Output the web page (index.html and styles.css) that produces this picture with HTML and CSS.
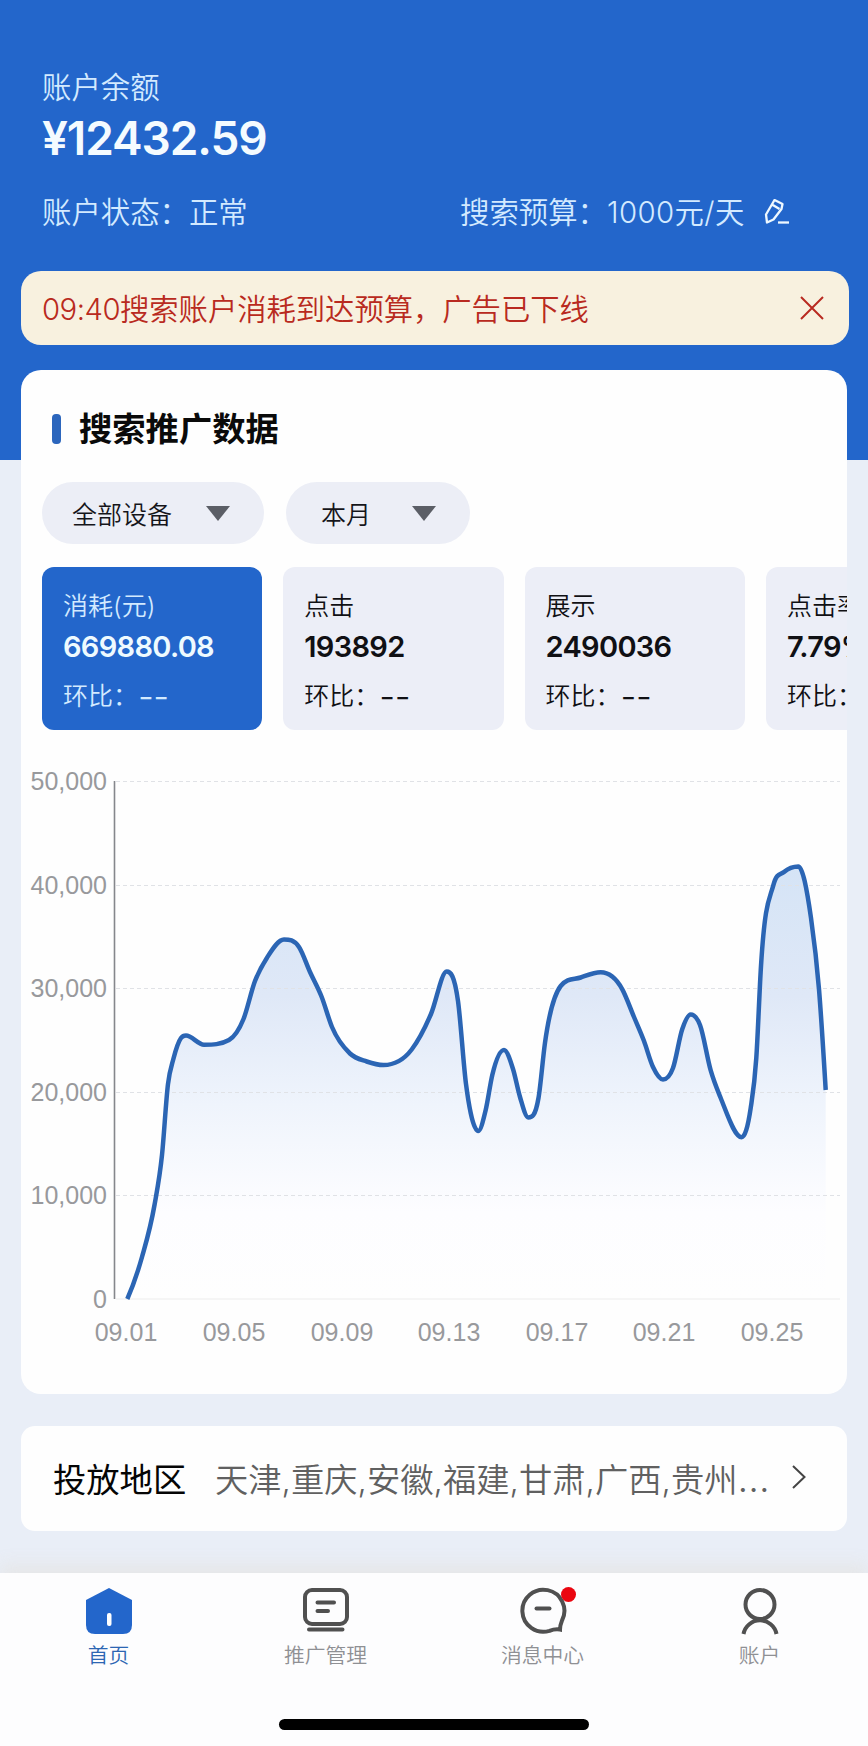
FILE: index.html
```
<!DOCTYPE html>
<html lang="zh-CN">
<head>
    <meta charset="UTF-8">
    <meta name="viewport" content="width=device-width, initial-scale=1.0">
    <title>搜索推广</title>
    <link rel="stylesheet" href="styles.css">
</head>
<body>
    <div class="page">
        <header class="account">
            <p class="accountLabel">账户余额</p>
            <h1 class="balance">¥12432.59</h1>
            <div class="accountRow">
                <p class="accountStatus">账户状态：正常</p>
                <p class="budget">搜索预算：<span class="budgetValue">1000元/天</span></p>
                <svg class="editIcon" width="26" height="28" viewBox="0 0 26 28" fill="none" stroke="currentColor" stroke-width="2.3" stroke-linejoin="round">
                    <path d="M10.5 1 L18.5 5 L17.5 10 L9.5 20.5 L3 23.5 L2 15.5 Z M8 5.5 L15.5 10"/>
                    <path d="M14 23.5 H25"/>
                </svg>
            </div>
        </header>

        <div class="notice">
            <span><span class="noticeTime">09:40</span>搜索账户消耗到达预算，广告已下线</span>
            <svg width="24" height="24" viewBox="0 0 24 24" fill="none" stroke="currentColor" stroke-width="2">
                <path d="M1 1 L23 23 M23 1 L1 23"/>
            </svg>
        </div>

        <section class="dataCard">
            <h2 class="cardTitle"><span>搜索推广数据</span></h2>
            <div class="filters">
                <button class="filter filterDevice">全部设备<i class="arrow"></i></button>
                <button class="filter filterMonth">本月<i class="arrow"></i></button>
            </div>
            <div class="stats">
                <div class="stat active">
                    <span class="statName">消耗(元)</span>
                    <strong>669880.08</strong>
                    <span class="statRatio">环比：<b class="dash">--</b></span>
                </div>
                <div class="stat">
                    <span class="statName">点击</span>
                    <strong>193892</strong>
                    <span class="statRatio">环比：<b class="dash">--</b></span>
                </div>
                <div class="stat">
                    <span class="statName">展示</span>
                    <strong>2490036</strong>
                    <span class="statRatio">环比：<b class="dash">--</b></span>
                </div>
                <div class="stat">
                    <span class="statName">点击率</span>
                    <strong>7.79%</strong>
                    <span class="statRatio">环比：<b class="dash">--</b></span>
                </div>
            </div>
            <svg class="chart" width="826" height="590" viewBox="21 760 826 590">
                <defs>
                    <linearGradient id="areaFill" gradientUnits="userSpaceOnUse" x1="0" y1="866" x2="0" y2="1299">
                        <stop offset="0" stop-color="#d5e4f6"/>
                        <stop offset="0.3" stop-color="#dfe8f7"/>
                        <stop offset="0.55" stop-color="#eff4fc"/>
                        <stop offset="0.8" stop-color="#fdfdff"/>
                        <stop offset="1" stop-color="#fefefe"/>
                    </linearGradient>
                </defs>
                <path id="area" class="area"/>
                <g class="grid">
                    <path d="M116 781.5 H840 M116 885.5 H840 M116 988.5 H840 M116 1092.5 H840 M116 1195.5 H840"/>
                    <path class="base" d="M116 1299 H840"/>
                </g>
                <path class="axis" d="M114.5 781 V1299"/>
                <path id="line" class="line"/>
                <g class="yLabels">
                    <text x="107" y="790">50,000</text>
                    <text x="107" y="894">40,000</text>
                    <text x="107" y="997">30,000</text>
                    <text x="107" y="1101">20,000</text>
                    <text x="107" y="1204">10,000</text>
                    <text x="107" y="1308">0</text>
                </g>
                <g class="xLabels">
                    <text x="126" y="1341">09.01</text>
                    <text x="234" y="1341">09.05</text>
                    <text x="342" y="1341">09.09</text>
                    <text x="449" y="1341">09.13</text>
                    <text x="557" y="1341">09.17</text>
                    <text x="664" y="1341">09.21</text>
                    <text x="772" y="1341">09.25</text>
                </g>
            </svg>
        </section>

        <section class="region">
            <span class="regionTitle">投放地区</span>
            <span class="regionList">天津,重庆,安徽,福建,甘肃,广西,贵州<span class="more">…</span></span>
            <svg width="16" height="26" viewBox="0 0 16 26" fill="none" stroke="#444" stroke-width="2">
                <path d="M2 2 L13.5 13 L2 24"/>
            </svg>
        </section>

        <nav class="tabbar">
            <div class="tabs">
                <a class="tab current">
                    <svg width="48" height="48" viewBox="0 0 48 48">
                        <path fill="#2366cb" d="M24 1 L47 13 V38 Q47 47 38 47 H10 Q1 47 1 38 V13 Z"/>
                        <rect x="22" y="26" width="4.5" height="13" rx="2" fill="#fff"/>
                    </svg>
                    <span>首页</span>
                </a>
                <a class="tab">
                    <svg width="48" height="48" viewBox="0 0 48 48" fill="none" stroke="#505050" stroke-width="4" stroke-linecap="round">
                        <rect x="3" y="3" width="42" height="34" rx="7"/>
                        <path d="M15.5 15.5 H32 M15.5 24 H26 M7 42.5 H40.5"/>
                    </svg>
                    <span>推广管理</span>
                </a>
                <a class="tab">
                    <svg width="48" height="48" viewBox="0 0 48 48" fill="none" stroke="#505050" stroke-width="4">
                        <path d="M41 42.5 C41 38 42.2 35.5 43.2 33 A21 21 0 1 0 30.5 43.8 C34.5 42.2 37 41.8 41 42.5 Z"/>
                        <path d="M17.5 21.5 H30.5" stroke-linecap="round"/>
                    </svg>
                    <i class="badge"></i>
                    <span>消息中心</span>
                </a>
                <a class="tab">
                    <svg width="48" height="48" viewBox="0 0 48 48" fill="none" stroke="#505050" stroke-width="4">
                        <circle cx="24" cy="17.5" r="14.5"/>
                        <path d="M7.5 47 A16.8 16.8 0 0 1 40.5 47"/>
                    </svg>
                    <span>账户</span>
                </a>
            </div>
            <div class="homeIndicator"></div>
        </nav>
    </div>

    <script>
        const points = [
            [127.3, 1299], [142, 1257], [154.5, 1205], [162, 1155], [168, 1084], [173.5, 1058.5],
            [181, 1038], [186, 1035.5], [204, 1044.7], [229, 1040], [243.5, 1019], [255, 981], [267, 957.7],
            [284, 939.5], [299, 947], [310, 972], [321.7, 997], [332, 1027], [350, 1053.5],
            [366.7, 1061.5], [383.5, 1065], [411.7, 1049.5], [431, 1014], [446.7, 971.5],
            [458, 1001], [466, 1084], [470.7, 1113], [478.3, 1131], [485.7, 1110],
            [492.3, 1075], [504, 1050], [513, 1069], [520, 1097], [528.3, 1117.5], [538.5, 1098],
            [545, 1042.7], [560.7, 986], [580.7, 977.5], [600.7, 972.3], [622.3, 989.3], [634, 1017],
            [644, 1041], [653, 1067], [663, 1079.5], [673, 1068], [682.3, 1029], [690.7, 1014.6],
            [700, 1025], [710.7, 1070.4], [720.7, 1098], [741.7, 1137.2], [750.7, 1108], [756.3, 1058],
            [761, 966], [773.3, 885.3], [784, 872], [798.3, 866.4],
            [811, 918], [819, 989.3], [825.7, 1090]
        ];

        // 平滑曲线，峰谷处切线水平
        const smooth = (pts) => {
            const last = pts.length - 1;
            const width = (i) => pts[i + 1][0] - pts[i][0];
            const slope = (i) => (pts[i + 1][1] - pts[i][1]) / width(i);
            const tangents = pts.map((p, i) => {
                if (i === 0) return slope(0) * 0.8;
                if (i === last) return slope(last - 1) * 1.1;
                const s0 = slope(i - 1);
                const s1 = slope(i);
                if (s0 * s1 <= 0) return 0;
                const t = (s0 * width(i) + s1 * width(i - 1)) / (width(i) + width(i - 1));
                return Math.sign(t) * Math.min(Math.abs(t), 3 * Math.abs(s0), 3 * Math.abs(s1));
            });
            let d = 'M' + pts[0].join(' ');
            for (let i = 1; i <= last; i++) {
                const [x0, y0] = pts[i - 1];
                const [x1, y1] = pts[i];
                const dx = (x1 - x0) / 3;
                d += ` C${x0 + dx} ${y0 + dx * tangents[i - 1]} ${x1 - dx} ${y1 - dx * tangents[i]} ${x1} ${y1}`;
            }
            return d;
        };

        const curve = smooth(points);
        document.getElementById('line').setAttribute('d', curve);
        document.getElementById('area').setAttribute('d', curve + ' V1299 H127.3 Z');
    </script>
</body>
</html>
```
FILE: styles.css
```
* {
  box-sizing: border-box;
  margin: 0;
  padding: 0;
}

body {
  font-family: "Inter", "Noto Sans CJK SC", sans-serif;
  font-weight: 350;
  background-color: #e9eef7;
}

svg {
  display: block;
  flex-shrink: 0;
}

.page {
  width: 868px;
  height: 1746px;
  display: flex;
  flex-direction: column;
  overflow: hidden;
  background: linear-gradient(#2366cb 460px, #e9eef7 460px);
}

.account {
  height: 271px;
  padding: 68px 42px 0;
  color: #d3eaff;
  font-size: 29.4px;
  line-height: 40px;
}

.balance {
  color: #f4fbff;
  font-size: 46px;
  font-weight: 600;
  line-height: 60px;
  letter-spacing: -1.1px;
}

.accountRow {
  display: flex;
  align-items: center;
  margin-top: 25px;
}

.accountStatus {
  width: 418px;
}

.budget {
  width: 304px;
  white-space: nowrap;
}

.budgetValue {
  letter-spacing: 0.4px;
}

.editIcon {
  color: #eef8ff;
}

.notice {
  width: 828px;
  height: 74px;
  margin-left: 21px;
  padding: 0 25px 2px 21px;
  display: flex;
  align-items: center;
  justify-content: space-between;
  border-radius: 20px;
  background-color: #f8f1df;
  color: #b92a20;
  font-size: 29.3px;
}

.notice svg {
  margin-top: 2px;
}

.noticeTime {
  letter-spacing: -0.5px;
}

.dataCard {
  width: 826px;
  height: 1024px;
  margin: 25px 0 0 21px;
  padding-top: 39px;
  border-radius: 20px;
  background-color: #fefefe;
  overflow: hidden;
}

.cardTitle {
  display: flex;
  align-items: center;
  height: 40px;
  padding-left: 31px;
  font-size: 33.3px;
  font-weight: 600;
  color: #0a0a0a;
}

.cardTitle span {
  padding-bottom: 5px;
}

.cardTitle::before {
  content: "";
  width: 9px;
  height: 30px;
  margin-right: 18px;
  border-radius: 4px;
  background-color: #2c66bd;
}

.filters {
  display: flex;
  gap: 22px;
  margin: 33px 0 0 21px;
}

.filter {
  height: 62px;
  display: flex;
  align-items: center;
  justify-content: space-between;
  border: none;
  border-radius: 31px;
  background-color: #eceef6;
  color: #15151a;
  font: inherit;
  font-size: 25px;
}

.filterDevice {
  width: 222px;
  padding: 0 34px 0 30px;
}

.filterMonth {
  width: 184px;
  padding: 0 34px 0 35px;
}

.arrow {
  border: 12px solid transparent;
  border-top: 15px solid #5b5e66;
  border-bottom: 0;
}

.stats {
  display: flex;
  gap: 21px;
  margin: 23px 0 0 21px;
}

.stat {
  flex: 0 0 220.3px;
  height: 163px;
  padding: 21px 0 0 21px;
  display: flex;
  flex-direction: column;
  border-radius: 12px;
  background-color: #eceef7;
  color: #101014;
  font-size: 25px;
  line-height: 36px;
  white-space: nowrap;
}

.stat strong {
  margin: 5px 0 13px;
  font-size: 29px;
  font-weight: 580;
  letter-spacing: -0.7px;
}

.stat.active {
  background-color: #2366cb;
  color: #d3eaff;
}

.stat.active strong {
  color: #eefaff;
}

.dash {
  font-size: 35px;
  font-weight: 300;
  line-height: 0;
  letter-spacing: -0.5px;
  vertical-align: -4px;
}

.chart {
  margin-top: 30px;
}

.area {
  fill: url(#areaFill);
}

.line {
  fill: none;
  stroke: #2b65b4;
  stroke-width: 4.5;
  stroke-linejoin: round;
}

.grid {
  stroke: #e0e2e6;
  stroke-dasharray: 4 3;
}

.grid .base {
  stroke: #ececec;
  stroke-dasharray: none;
}

.axis {
  stroke: #85878c;
  stroke-width: 1.6;
}

.yLabels,
.xLabels {
  font-family: "Liberation Sans", Arial, sans-serif;
  font-size: 25px;
  font-weight: 400;
  fill: #98999c;
}

.yLabels {
  text-anchor: end;
}

.xLabels {
  text-anchor: middle;
}

.region {
  width: 826px;
  height: 105px;
  margin: 32px 0 0 21px;
  padding: 0 40px 3px 32px;
  display: flex;
  align-items: center;
  border-radius: 14px;
  background-color: #fefefe;
  font-size: 33.3px;
  white-space: nowrap;
}

.regionTitle {
  width: 162px;
  color: #050505;
  font-weight: 400;
}

.regionList {
  flex: 1;
  color: #606060;
}

.more {
  font-size: 38px;
  line-height: 0;
}

.tabbar {
  flex: 1;
  margin-top: 42px;
  display: flex;
  flex-direction: column;
  align-items: center;
  background-color: #fdfdfe;
  box-shadow: 0 -8px 16px rgba(230, 230, 230, 0.9);
}

.tabs {
  width: 868px;
  height: 146px;
  padding-top: 14px;
  display: grid;
  grid-template-columns: repeat(4, 1fr);
}

.tab {
  position: relative;
  display: flex;
  flex-direction: column;
  align-items: center;
  gap: 5px;
  color: #8f9094;
  font-size: 20.8px;
  line-height: 32px;
}

.tab.current {
  color: #2c66b3;
}

.badge {
  position: absolute;
  top: 0;
  left: 127px;
  width: 15px;
  height: 15px;
  border-radius: 50%;
  background-color: #ea0610;
}

.homeIndicator {
  width: 310px;
  height: 11px;
  border-radius: 6px;
  background-color: #000;
}
```
